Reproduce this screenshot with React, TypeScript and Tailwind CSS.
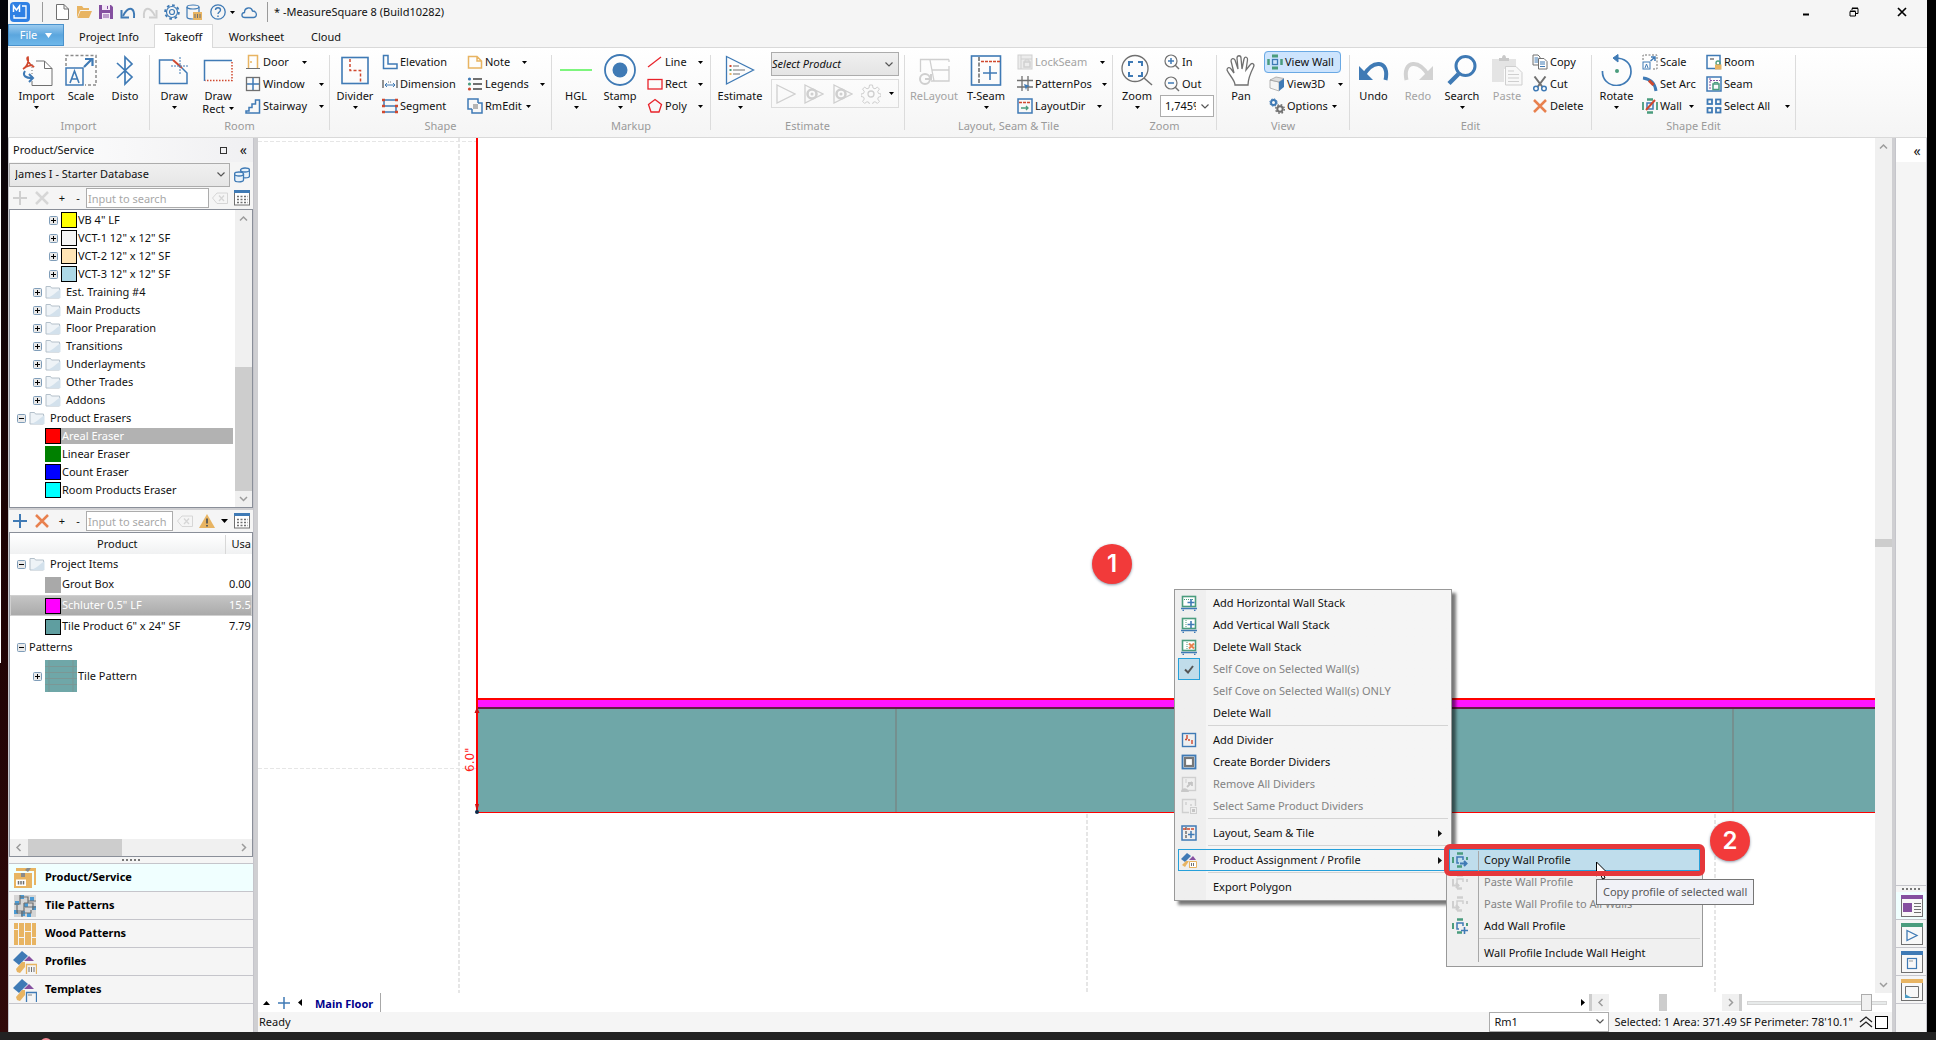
import type { ReactNode } from "react";

const BLUE = "#3f7ab5";
const GREEN = "#4a9c7d";
const RED = "#d0492f";
const ORANGE = "#e8b462";
const GRAY = "#707070";

type SvgProps = {
  size?: number;
  children: ReactNode;
};

const Svg = ({ size = 16, children }: SvgProps) => {
  return (
    <svg
      width={size}
      height={size}
      viewBox={`0 0 ${size} ${size}`}
      fill="none"
      stroke={BLUE}
      className="shrink-0"
      aria-hidden="true"
    >
      {children}
    </svg>
  );
};

const Arrow = ({ className = "" }: { className?: string }) => (
  <svg width="5" height="3" viewBox="0 0 5 3" className={`shrink-0 ${className}`} aria-hidden="true">
    <path d="M0 0h5L2.5 3z" fill="#000" />
  </svg>
);

const Chevron = ({ className = "" }: { className?: string }) => (
  <svg width="8" height="5" viewBox="0 0 8 5" className={`shrink-0 ${className}`} aria-hidden="true">
    <path d="M0.5 0.5L4 4L7.5 0.5" fill="none" stroke="#555" strokeWidth="1.2" />
  </svg>
);

/* ---------- large ribbon icons ---------- */

const ImportIcon = () => (
  <Svg size={32}>
    <path d="M15 7H23.500L31 14.500V31.500H11V27" stroke={GRAY} />
    <path d="M23.500 7V14.500H31" stroke={GRAY} />
    <path d="M11 10V24" stroke={GRAY} strokeDasharray="1 2" />
    <path d="M2 15C6 13 8 8 7 3C5 3 6 9 13 13C11 10 6 12 2 15z" stroke={RED} strokeWidth="1.700" />
    <path d="M4 17C1 22 5 24 11 24" strokeWidth="2" />
    <path d="M8 20l4 4-4 4" strokeWidth="2" />
  </Svg>
);

const ScaleIcon = () => (
  <Svg size={32}>
    <path d="M1 12V1.500H31V31H20" stroke="#8a8a8a" strokeWidth="1.500" strokeDasharray="3 2" />
    <rect x="1" y="14" width="17" height="17" strokeWidth="1.500" />
    <path d="M5 29L9.500 17L14 29M6.500 25H12.500" strokeWidth="1.600" />
    <path d="M19 13L26 6M20 5H27.500V12" strokeWidth="2.200" />
  </Svg>
);

const DistoIcon = () => (
  <Svg size={32}>
    <path d="M8 9L23 23L16 30V3L23 10L8 24" strokeWidth="1.700" />
  </Svg>
);

const DrawIcon = () => (
  <Svg size={32}>
    <path d="M15 6H1.500V29.500H29V19L24 14" strokeWidth="1.500" />
    <path d="M15 6L24 14" stroke={RED} strokeWidth="2" />
    <path d="M22 3V21M13 12H31" strokeDasharray="2 1" />
  </Svg>
);

const DrawRectIcon = () => (
  <Svg size={32}>
    <path d="M2.500 27V6.500H30" strokeWidth="1.500" />
    <path d="M30 8V26.500H3" stroke={RED} strokeWidth="1.500" strokeDasharray="1.500 1.500" />
  </Svg>
);

const DividerIcon = () => (
  <Svg size={32}>
    <rect x="3" y="3.500" width="26" height="26" strokeWidth="1.600" />
    <path d="M11 5V16.500H21.500V29" stroke={RED} strokeWidth="1.500" strokeDasharray="3 2" />
  </Svg>
);

const HglIcon = () => (
  <Svg size={32}>
    <path d="M0 16H32" stroke="#7df57d" strokeWidth="2" />
  </Svg>
);

const StampIcon = () => (
  <Svg size={32}>
    <circle cx="16" cy="16" r="15" strokeWidth="1.800" />
    <circle cx="16" cy="16" r="7.500" fill={BLUE} stroke="none" />
  </Svg>
);

const EstimateIcon = () => (
  <Svg size={32}>
    <path d="M2.500 2.500L29.500 16L2.500 30z" strokeWidth="1.300" />
    <path d="M9 12H15M9 16H21M9 20H16" stroke={GRAY} />
    <path d="M5.500 12h2" stroke={RED} strokeWidth="2" />
    <path d="M5.500 16h2" stroke={GREEN} strokeWidth="2" />
    <path d="M5.500 20h2" stroke={ORANGE} strokeWidth="2" />
  </Svg>
);

const ReLayoutIcon = () => (
  <Svg size={32}>
    <g stroke="#cfcfcf" strokeWidth="1.300">
      <path d="M2.500 18V5.500H31M12 6L16 27M14 16H31M31 5.500V8M31 12V27H13" />
      <circle cx="7" cy="25" r="5" strokeWidth="2" />
      <path d="M7 25H13V20" strokeWidth="2" />
    </g>
  </Svg>
);

const TSeamIcon = () => (
  <Svg size={32}>
    <rect x="1.500" y="2" width="29" height="29" strokeWidth="1.600" />
    <path d="M9 3V30" stroke={GRAY} strokeWidth="1.600" strokeDasharray="4 1.500" />
    <path d="M11 7.500H30" stroke={RED} strokeWidth="1.600" strokeDasharray="3 1" />
    <path d="M20 12V26M13 19H27" strokeWidth="1.600" />
  </Svg>
);

const ZoomIcon = () => (
  <Svg size={32}>
    <circle cx="14" cy="14.500" r="13" stroke={GRAY} strokeWidth="1.300" />
    <path d="M23 24L31 31" stroke={GRAY} strokeWidth="1.500" />
    <path d="M8 12V8H12M17 8H21V12M21 18V22H17M12 22H8V18" strokeWidth="2" />
  </Svg>
);

const PanIcon = () => (
  <Svg size={32}>
    <path
      d="M10 31C10 26 4 21 2 16C2 13 5 13 6 15L9 19L6 7C6 4 9 4 10 6L13 15L12 4C12 1 16 1 16 4L17 15L19 5C20 2 23 3 22.500 6L21 16L25 11C27 8 30 10 28.500 13C26 18 23 24 23 31z"
      fill="#fff"
      stroke={GRAY}
      strokeWidth="1.300"
    />
  </Svg>
);

const TurnIcon = ({ color, flip }: { color: string; flip?: boolean }) => (
  <Svg size={32}>
    <g transform={flip ? "translate(32 0) scale(-1 1)" : undefined}>
      <path d="M5 22C10 14 16 9.500 21 10C27 10.500 29.500 17 27.500 26" stroke={color} strokeWidth="4" />
      <path d="M1 12V26H15L1 12z" fill={color} stroke="none" />
    </g>
  </Svg>
);

const SearchIcon = () => (
  <Svg size={32}>
    <circle cx="19.500" cy="12" r="9.500" strokeWidth="3" />
    <path d="M12.500 20L3 29.500" strokeWidth="4.500" />
  </Svg>
);

const PasteIcon = () => (
  <Svg size={32}>
    <path d="M1 5H25V15H13V28H1z" fill="#e4e4e4" stroke="none" />
    <path d="M8 7V4H11C11 0 15 0 15 4H18V7z" fill="#c9c9c9" stroke="none" />
    <path d="M14.500 12.500H25L31 18.500V31H14.500z" stroke="#cfcfcf" fill="#f8f8f8" />
    <path d="M17 17H23M17 20.500H28M17 24H28M17 27.500H28" stroke="#cfcfcf" />
  </Svg>
);

const RotateIcon = () => (
  <Svg size={32}>
    <path d="M1.500 17C1 25 7 31.500 15.500 31.500C25 31.500 30 24 30 17.500C30 9 24 4 14 4" strokeWidth="1.700" />
    <path d="M17 0.500L12 4L17 8z" fill={BLUE} stroke={BLUE} />
    <circle cx="16" cy="17" r="2" fill={GREEN} stroke="none" />
  </Svg>
);

/* ---------- small ribbon icons ---------- */

const DoorIcon = () => (
  <Svg>
    <path d="M3.500 14V1.500H12.500V14" stroke={ORANGE} strokeWidth="1.500" />
    <path d="M1 14.500H15" stroke={GRAY} />
    <circle cx="6" cy="8" r="1" fill={ORANGE} stroke="none" />
  </Svg>
);

const WindowIcon = () => (
  <Svg>
    <path d="M8 2V14M2 8H14" strokeWidth="1.500" />
    <rect x="1.500" y="1.500" width="13" height="13" stroke={GRAY} strokeWidth="1.300" />
  </Svg>
);

const StairIcon = () => (
  <Svg>
    <path d="M1 15H14.500V2H10.500V6H7V9.500H4V13H1z" strokeWidth="1.500" />
  </Svg>
);

const ElevationIcon = () => (
  <Svg>
    <path d="M1.500 1.500H6V10H15V14.500H1.500z" strokeWidth="1.500" />
  </Svg>
);

const DimensionIcon = () => (
  <Svg>
    <path d="M1 4V12M15 4V12" stroke={GRAY} strokeWidth="1.500" />
    <path d="M3 9H13M5 7L3 9L5 11M11 7L13 9L11 11" />
    <path d="M6 6H10" stroke={GRAY} strokeDasharray="1 1" />
  </Svg>
);

const SegmentIcon = () => (
  <Svg>
    <path d="M2 2H14M2 2V8H14V14H2" strokeWidth="1.500" />
    <path d="M0 2h3M13 2h3M0 8h3M13 8h3M0 14h3M13 14h3" stroke={RED} strokeWidth="2.500" />
  </Svg>
);

const NoteIcon = () => (
  <Svg>
    <path d="M1.500 2.500H10L14.500 7V14H1.500zM10 2.500V7H14.500" stroke={ORANGE} strokeWidth="1.500" />
  </Svg>
);

const LegendsIcon = () => (
  <Svg>
    <path d="M6 3H15M6 8H15M6 13H15" stroke={GRAY} strokeWidth="2" />
    <circle cx="2.500" cy="3" r="1.600" fill={BLUE} stroke="none" />
    <circle cx="2.500" cy="8" r="1.600" fill={GREEN} stroke="none" />
    <circle cx="2.500" cy="13" r="1.600" fill={RED} stroke="none" />
  </Svg>
);

const RmEditIcon = () => (
  <Svg>
    <rect x="6" y="6" width="5" height="5" fill="#b5b5b5" stroke="none" />
    <path d="M5 11H1V1H11V5" strokeWidth="1.500" />
    <path d="M11 5H15V15H5V11" strokeWidth="1.500" />
  </Svg>
);

const LineIcon = () => (
  <Svg>
    <path d="M1 13L14 3" stroke="#e8222a" strokeWidth="1.200" />
  </Svg>
);

const RectIcon = () => (
  <Svg>
    <rect x="1" y="3.500" width="14" height="9.500" stroke="#e8222a" strokeWidth="1.300" />
  </Svg>
);

const PolyIcon = () => (
  <Svg>
    <path d="M8 1.500L14.500 6.500L12 14H4L1.500 6.500z" stroke="#e8222a" strokeWidth="1.300" />
  </Svg>
);

const LockSeamIcon = () => (
  <Svg>
    <g stroke="#d0d0d0">
      <rect x="1" y="1" width="14" height="14" fill="#ececec" />
      <path d="M4 1V15M4 5H15" />
      <rect x="7" y="8" width="6" height="5" strokeWidth="1.500" />
      <path d="M8 8V6H12V8" />
    </g>
  </Svg>
);

const PatternPosIcon = () => (
  <Svg>
    <path d="M5 0V15M11 0V15M0 4.500H16M0 11H16" stroke={GRAY} strokeWidth="1.300" />
    <path d="M7 8l6 2-3 1-1 3z" fill={BLUE} stroke="none" />
  </Svg>
);

const LayoutDirIcon = () => (
  <Svg>
    <rect x="1" y="1" width="14" height="14" strokeWidth="1.500" />
    <path d="M2 4.500H14" stroke={RED} strokeWidth="1.500" strokeDasharray="3 1" />
    <path d="M4 10H11M9 8L11 10L9 12" stroke={GREEN} strokeWidth="1.300" />
  </Svg>
);

const MagnifyIcon = ({ plus }: { plus?: boolean }) => (
  <Svg>
    <circle cx="7" cy="7" r="6" stroke={GRAY} strokeWidth="1.200" />
    <path d="M11 11L15 15" stroke={GRAY} strokeWidth="1.500" />
    <path d={plus ? "M4 7H10M7 4V10" : "M4 7H10"} strokeWidth="1.500" />
  </Svg>
);

const ViewWallIcon = () => (
  <Svg>
    <path d="M5 2H11M5 14H11" stroke={GREEN} strokeWidth="3" />
    <path d="M1.500 5V11M14.500 5V11" stroke={GREEN} strokeWidth="2.500" />
    <rect x="5.500" y="5.500" width="5" height="5" strokeWidth="1.300" />
  </Svg>
);

const CubeIcon = () => (
  <Svg>
    <path d="M1 4L10 6V15L1 12z" fill="#f4f4f4" stroke="#999" strokeWidth="0.700" />
    <path d="M1 4L7 1L15 2.500L10 6z" fill="#ddd" stroke="#999" strokeWidth="0.700" />
    <path d="M10 6L15 2.500V11L10 15z" fill={BLUE} stroke="none" />
  </Svg>
);

const OptionsIcon = () => (
  <Svg>
    <circle cx="4.500" cy="4.500" r="2.500" strokeWidth="2" />
    <circle cx="4.500" cy="4.500" r="3.700" strokeWidth="1" strokeDasharray="1.500 1.400" />
    <circle cx="11" cy="11" r="2.700" stroke={GRAY} strokeWidth="2" />
    <circle cx="11" cy="11" r="4.300" stroke={GRAY} strokeWidth="1.400" strokeDasharray="1.700 1.700" />
  </Svg>
);

const CopyIcon = () => (
  <Svg>
    <path d="M1 1H6L8 3V11H1z" stroke={GRAY} />
    <path d="M2.500 4H6M2.500 6H6M2.500 8H6" />
    <path d="M6.500 4.500H12L15 7.500V15H6.500z" fill="#fff" stroke={GRAY} />
    <path d="M8 8H13M8 10H13M8 12.500H13" />
  </Svg>
);

const CutIcon = () => (
  <Svg>
    <path d="M2.500 0.500L10.500 11M13.500 0.500L5.500 11" stroke={GRAY} strokeWidth="2" />
    <circle cx="4" cy="12.500" r="2.300" strokeWidth="1.500" />
    <circle cx="12" cy="12.500" r="2.300" strokeWidth="1.500" />
  </Svg>
);

const CrossIcon = ({ color = "#e8814f" }: { color?: string }) => (
  <Svg>
    <path d="M2 2L14 14M14 2L2 14" stroke={color} strokeWidth="2.500" />
  </Svg>
);

const PlusIcon = ({ color = BLUE }: { color?: string }) => (
  <Svg>
    <path d="M8 1V15M1 8H15" stroke={color} strokeWidth="2" />
  </Svg>
);

const SmallScaleIcon = () => (
  <Svg>
    <path d="M1 6V1H15V15H10" stroke={GRAY} strokeDasharray="2 1.500" />
    <rect x="1" y="8" width="7" height="7" />
    <path d="M3 14L4.500 10L6 14" />
    <path d="M8.500 7L12.500 3.500M9 3H13V7" strokeWidth="1.500" />
  </Svg>
);

const SetArcIcon = () => (
  <Svg>
    <path d="M1 2C9 3 13 8 14 15" strokeWidth="3" />
    <path d="M7 4.500L11.500 9" stroke={RED} strokeWidth="3" />
  </Svg>
);

const WallIcon = () => (
  <Svg>
    <path d="M5 1.500H11M5 14.500H11" stroke={GREEN} strokeWidth="2.500" />
    <path d="M1 4V12M15 4V12" stroke={GREEN} strokeWidth="1.800" />
    <rect x="5" y="5" width="6" height="6" strokeWidth="1.500" />
    <path d="M4 12L13 2" stroke={RED} strokeWidth="2" />
  </Svg>
);

const RoomIcon = () => (
  <Svg>
    <rect x="1" y="1.500" width="13" height="13" strokeWidth="1.500" />
    <path d="M4 5H8" stroke="#999" strokeWidth="2" />
    <circle cx="12" cy="9" r="2" stroke={GREEN} strokeWidth="1.300" />
    <rect x="9" y="10.500" width="6.500" height="5" fill={ORANGE} stroke="none" />
  </Svg>
);

const SeamIcon = () => (
  <Svg>
    <rect x="1" y="1" width="14" height="14" strokeWidth="1.500" />
    <path d="M4 2V14M4 4.500H14" stroke="#8550a0" strokeDasharray="2 1" />
    <rect x="7" y="8" width="6" height="5.500" stroke={GREEN} strokeWidth="1.500" />
    <path d="M8 8V6.500H12V8" stroke={GREEN} />
  </Svg>
);

const SelectAllIcon = () => (
  <Svg>
    <g strokeWidth="1.800">
      <rect x="1.500" y="1.500" width="4.500" height="4.500" />
      <rect x="10" y="1.500" width="4.500" height="4.500" />
      <rect x="1.500" y="10" width="4.500" height="4.500" />
      <rect x="10" y="10" width="4.500" height="4.500" />
    </g>
  </Svg>
);

/* ---------- ribbon ---------- */

type BigButtonProps = {
  icon: ReactNode;
  label: string;
  label2?: string;
  arrow?: boolean;
  disabled?: boolean;
  className?: string;
};

const BigButton = ({ icon, label, label2, arrow, disabled, className = "w-11" }: BigButtonProps) => {
  return (
    <button
      type="button"
      disabled={disabled}
      className={`flex flex-col items-center pt-[3px] leading-[13px] whitespace-nowrap disabled:text-[#a3a3a3] ${className}`}
    >
      {icon}
      <span className="mt-[3px]">{label}</span>
      {label2 && (
        <span className="flex items-center gap-1">
          {label2}
          <Arrow />
        </span>
      )}
      {arrow && <Arrow className="mt-1" />}
    </button>
  );
};

type SmallButtonProps = {
  icon: ReactNode;
  label: string;
  arrow?: boolean;
  disabled?: boolean;
  active?: boolean;
  className?: string;
};

const SmallButton = ({ icon, label, arrow, disabled, active, className = "" }: SmallButtonProps) => {
  return (
    <button
      type="button"
      disabled={disabled}
      className={`flex h-[22px] items-center gap-[2px] whitespace-nowrap disabled:text-[#a3a3a3] ${
        active ? "rounded-sm bg-[#cde4fd] outline -outline-offset-1 outline-[#6aa9e4]" : ""
      } ${className}`}
    >
      {icon}
      <span>{label}</span>
      {arrow && <Arrow className="ml-auto" />}
    </button>
  );
};

type GroupProps = {
  title: string;
  className: string;
  children: ReactNode;
};

const Group = ({ title, className, children }: GroupProps) => {
  return (
    <section className={`flex shrink-0 items-start ${className}`}>
      <div className="flex min-w-0 flex-1 flex-col">
        <div className="flex h-[69px] items-start pt-[3px]">{children}</div>
        <h2 className="text-center leading-[18px] text-[#9a9a9a]">{title}</h2>
      </div>
      <div className="mt-[7px] h-[75px] w-px bg-[#dcdcdc]" />
    </section>
  );
};

const Column = ({ className = "", children }: { className?: string; children: ReactNode }) => (
  <div className={`flex flex-col items-start ${className}`}>{children}</div>
);

const PlayGhost = ({ dot }: { dot?: boolean }) => (
  <Svg size={20}>
    <path d="M1 1L19 10L1 19z" stroke="#cfcfcf" strokeWidth="1.300" />
    {dot && <circle cx="8" cy="10" r="4.500" stroke="#cfcfcf" strokeWidth="2.500" />}
    {dot && <circle cx="8" cy="10" r="1.500" fill="#cfcfcf" stroke="none" />}
  </Svg>
);

const Ribbon = () => {
  return (
    <div className="flex h-[91px] overflow-hidden border-y border-[#d9d9d9] bg-linear-to-b from-white to-[#f5f5f5]">
      <Group title="Import" className="w-[142px]">
        <BigButton icon={<ImportIcon />} label="Import" arrow className="ml-[6px] w-[45px]" />
        <BigButton icon={<ScaleIcon />} label="Scale" />
        <BigButton icon={<DistoIcon />} label="Disto" />
      </Group>
      <Group title="Room" className="w-[180px]">
        <BigButton icon={<DrawIcon />} label="Draw" arrow className="w-12" />
        <BigButton icon={<DrawRectIcon />} label="Draw" label2="Rect" className="w-10" />
        <Column className="ml-[7px]">
          <SmallButton icon={<DoorIcon />} label="Door" arrow className="w-[62px]" />
          <SmallButton icon={<WindowIcon />} label="Window" arrow className="w-[79px]" />
          <SmallButton icon={<StairIcon />} label="Stairway" arrow className="w-[79px]" />
        </Column>
      </Group>
      <Group title="Shape" className="w-[222px]">
        <BigButton icon={<DividerIcon />} label="Divider" arrow className="w-[50px]" />
        <Column className="ml-[2px] w-[85px]">
          <SmallButton icon={<ElevationIcon />} label="Elevation" />
          <SmallButton icon={<DimensionIcon />} label="Dimension" />
          <SmallButton icon={<SegmentIcon />} label="Segment" />
        </Column>
        <Column>
          <SmallButton icon={<NoteIcon />} label="Note" arrow className="w-[60px]" />
          <SmallButton icon={<LegendsIcon />} label="Legends" arrow className="w-[78px]" />
          <SmallButton icon={<RmEditIcon />} label="RmEdit" arrow className="w-[64px]" />
        </Column>
      </Group>
      <Group title="Markup" className="w-[159px]">
        <BigButton icon={<HglIcon />} label="HGL" arrow className="w-12" />
        <BigButton icon={<StampIcon />} label="Stamp" arrow className="w-10" />
        <Column className="ml-[7px] w-14">
          <SmallButton icon={<LineIcon />} label="Line" arrow className="w-full" />
          <SmallButton icon={<RectIcon />} label="Rect" arrow className="w-full" />
          <SmallButton icon={<PolyIcon />} label="Poly" arrow className="w-full" />
        </Column>
      </Group>
      <Group title="Estimate" className="w-[194px]">
        <BigButton icon={<EstimateIcon />} label="Estimate" arrow className="w-[58px]" />
        <div className="ml-[2px] w-32">
          <div className="relative mt-px">
            <select
              aria-label="Select Product"
              className="h-6 w-full appearance-none border border-[#acacac] bg-linear-to-b from-[#f0f0f0] to-[#e4e4e4] italic"
            >
              <option>Select Product</option>
            </select>
            <Chevron className="pointer-events-none absolute top-[10px] right-[6px]" />
          </div>
          <div className="mt-[3px] flex h-[29px] items-center justify-between border border-[#dcdcdc] px-1">
            <PlayGhost />
            <PlayGhost dot />
            <PlayGhost dot />
            <Svg size={20}>
              <circle cx="10" cy="10" r="3" stroke="#cfcfcf" strokeWidth="1.300" />
              <path
                d="M8.500 1h3l.5 3 2 .8 2.400-1.700 2 2-1.700 2.400.8 2 2.500.5v2.500l-2.500.5-.8 2 1.700 2.400-2 2-2.400-1.700-2 .8-.5 2.500h-3l-.5-2.500-2-.8-2.400 1.700-2-2 1.700-2.400-.8-2-2.500-.5v-2.500l2.500-.5.8-2L1.600 5.100l2-2L6 4.800l2-.8z"
                stroke="#cfcfcf"
              />
            </Svg>
            <Arrow />
          </div>
        </div>
      </Group>
      <Group title="Layout, Seam & Tile" className="w-[208px]">
        <BigButton icon={<ReLayoutIcon />} label="ReLayout" disabled className="w-[58px]" />
        <BigButton icon={<TSeamIcon />} label="T-Seam" arrow className="w-[46px]" />
        <Column className="ml-2">
          <SmallButton icon={<LockSeamIcon />} label="LockSeam" arrow disabled className="w-[88px]" />
          <SmallButton icon={<PatternPosIcon />} label="PatternPos" arrow className="w-[90px]" />
          <SmallButton icon={<LayoutDirIcon />} label="LayoutDir" arrow className="w-[85px]" />
        </Column>
      </Group>
      <Group title="Zoom" className="w-[104px]">
        <BigButton icon={<ZoomIcon />} label="Zoom" arrow className="ml-px w-[46px]" />
        <Column>
          <SmallButton icon={<MagnifyIcon plus />} label="In" className="ml-1" />
          <SmallButton icon={<MagnifyIcon />} label="Out" className="ml-1" />
          <div className="relative">
            <select
              aria-label="Zoom level"
              className="h-[22px] w-[54px] appearance-none border border-[#acacac] bg-white pl-1"
            >
              <option>1,745%</option>
            </select>
            <div className="pointer-events-none absolute top-px right-px flex h-5 w-[17px] items-center justify-center bg-white">
              <Chevron />
            </div>
          </div>
        </Column>
      </Group>
      <Group title="View" className="w-[133px]">
        <BigButton icon={<PanIcon />} label="Pan" className="ml-px w-[46px]" />
        <Column>
          <SmallButton icon={<ViewWallIcon />} label="View Wall" active className="w-[77px] px-[3px]" />
          <SmallButton icon={<CubeIcon />} label="View3D" arrow className="ml-[5px] w-[74px]" />
          <SmallButton icon={<OptionsIcon />} label="Options" arrow className="ml-[5px] w-[68px]" />
        </Column>
      </Group>
      <Group title="Edit" className="w-[242px]">
        <BigButton icon={<TurnIcon color={BLUE} />} label="Undo" className="ml-px w-[45px]" />
        <BigButton icon={<TurnIcon color="#d2d2d2" flip />} label="Redo" disabled />
        <BigButton icon={<SearchIcon />} label="Search" arrow />
        <BigButton icon={<PasteIcon />} label="Paste" disabled className="w-[46px]" />
        <Column className="ml-[2px]">
          <SmallButton icon={<CopyIcon />} label="Copy" />
          <SmallButton icon={<CutIcon />} label="Cut" />
          <SmallButton icon={<CrossIcon />} label="Delete" />
        </Column>
      </Group>
      <Group title="Shape Edit" className="w-[204px]">
        <BigButton icon={<RotateIcon />} label="Rotate" arrow className="w-[49px]" />
        <Column className="ml-px w-16">
          <SmallButton icon={<SmallScaleIcon />} label="Scale" />
          <SmallButton icon={<SetArcIcon />} label="Set Arc" />
          <SmallButton icon={<WallIcon />} label="Wall" arrow className="w-[52px]" />
        </Column>
        <Column>
          <SmallButton icon={<RoomIcon />} label="Room" />
          <SmallButton icon={<SeamIcon />} label="Seam" />
          <SmallButton icon={<SelectAllIcon />} label="Select All" arrow className="w-[84px]" />
        </Column>
      </Group>
    </div>
  );
};

/* ---------- title bar and tabs ---------- */

const QuickAccess = () => (
  <div className="flex items-center gap-[6px]">
    <button type="button" aria-label="New">
      <Svg>
        <path d="M2.500 0.500H10L14.500 5V15.500H2.500zM10 0.500V5H14.500" fill="#fff" stroke={GRAY} />
      </Svg>
    </button>
    <button type="button" aria-label="Open">
      <Svg>
        <path d="M1 14V2H6L7.500 4H13V6H4L1 14z" fill={ORANGE} stroke="none" />
        <path d="M4.500 7H16L13 14H1.500z" fill={ORANGE} stroke="none" />
      </Svg>
    </button>
    <button type="button" aria-label="Save">
      <Svg>
        <path d="M1 1H13L15 3V15H1z" fill="#8550a0" stroke="none" />
        <path d="M4 1H12V6H4zM4 9H12V15H4z" fill="#f3e8f7" stroke="none" />
        <path d="M9.500 2V5M5 11H11M5 13H11" stroke="#8550a0" />
      </Svg>
    </button>
    <button type="button" aria-label="Undo">
      <Svg>
        <path d="M3 12C6 6 9 4 11.500 5C14 6 14.500 9 14 14" strokeWidth="2" />
        <path d="M1.500 6V13.500H9" strokeWidth="2" />
      </Svg>
    </button>
    <button type="button" aria-label="Redo" disabled>
      <Svg>
        <path d="M13 12C10 6 7 4 4.500 5C2 6 1.500 9 2 14" stroke="#cfcfcf" strokeWidth="2" />
        <path d="M14.500 6V13.500H7" stroke="#cfcfcf" strokeWidth="2" />
      </Svg>
    </button>
    <button type="button" aria-label="Settings">
      <Svg>
        <circle cx="8" cy="8" r="2.500" strokeWidth="1.200" />
        <circle cx="8" cy="8" r="5.500" strokeWidth="1.200" />
        <circle cx="8" cy="8" r="6.900" strokeWidth="1.800" strokeDasharray="2.700 2.700" />
      </Svg>
    </button>
    <button type="button" aria-label="Database">
      <Svg>
        <ellipse cx="7" cy="3" rx="6" ry="2" strokeWidth="1.200" />
        <path d="M1 3V13C1 14.500 4 15 7 15M13 3V8" strokeWidth="1.200" />
        <rect x="7" y="8" width="9" height="8" fill={ORANGE} stroke="none" />
        <path d="M9 10V14M11.500 10V14M14 10V14" stroke={GRAY} />
      </Svg>
    </button>
    <button type="button" aria-label="Help" className="ml-[2px] flex items-center gap-1">
      <Svg>
        <circle cx="8" cy="8" r="7.200" strokeWidth="1.300" />
        <path d="M5.500 6C5.500 3 10.500 3 10.500 6C10.500 8 8 8 8 10" strokeWidth="1.400" />
        <path d="M8 11.500V13" strokeWidth="1.400" />
      </Svg>
      <Arrow />
    </button>
    <button type="button" aria-label="Cloud sync">
      <Svg>
        <path
          d="M4 13.500C0 13.500 0 9 3.500 8.500C3.500 3 10.500 2.500 11.500 7C16.500 7 16.500 13.500 12.500 13.500z"
          strokeWidth="1.300"
        />
      </Svg>
    </button>
  </div>
);

const TitleBar = () => (
  <header className="flex h-6 items-center bg-[#f5f5f5]">
    <svg width="22" height="22" viewBox="0 0 22 22" className="ml-px" aria-hidden="true">
      <rect x="1" y="1" width="20" height="20" rx="4" fill="#2f80e4" />
      <path d="M4.500 11V5L7.500 9L10.500 5V11" fill="none" stroke="#fff" strokeWidth="1.500" />
      <path d="M13 5H17V17H5V14" fill="none" stroke="#fff" strokeWidth="1.300" />
    </svg>
    <div className="mx-[11px] h-5 w-px bg-[#9a9a9a]" />
    <QuickAccess />
    <div className="mr-[6px] ml-[10px] h-5 w-px bg-[#9a9a9a]" />
    <h1>* -MeasureSquare 8 (Build10282)</h1>
    <div className="mr-5 ml-auto flex items-center gap-[38px]">
      <button type="button" aria-label="Minimize">
        <svg width="10" height="10" viewBox="0 0 10 10">
          <path d="M2 7.500H8" stroke="#000" strokeWidth="2" />
        </svg>
      </button>
      <button type="button" aria-label="Restore">
        <svg width="10" height="10" viewBox="0 0 10 10" fill="none" stroke="#000">
          <path d="M3 3V1.500H9V6.500H7M3 1H9" />
          <path d="M1 4.500H6.500V9H1zM1 4H6.500" />
        </svg>
      </button>
      <button type="button" aria-label="Close">
        <svg width="10" height="10" viewBox="0 0 10 10" fill="none" stroke="#000" strokeWidth="1.700">
          <path d="M1 1L9 9M9 1L1 9" />
        </svg>
      </button>
    </div>
  </header>
);

const Tabs = () => (
  <nav className="flex h-[23px] items-end bg-[#f5f5f5]">
    <button
      type="button"
      className="flex h-[22px] w-14 items-center justify-center gap-2 self-start border border-[#4a92cc] bg-linear-to-b from-[#9bcbef] via-[#5ba6de] to-[#6fb8ea] text-white"
    >
      File
      <svg width="7" height="5" viewBox="0 0 7 5" aria-hidden="true">
        <path d="M0 0h7L3.500 5z" fill="#fff" />
      </svg>
    </button>
    <a href="#project" className="w-[90px] pb-[2px] text-center">
      Project Info
    </a>
    <a
      href="#takeoff"
      className="z-10 -mb-px h-6 w-[59px] border border-b-0 border-[#d9d9d9] bg-white pt-1 text-center"
    >
      Takeoff
    </a>
    <a href="#worksheet" className="w-[87px] pb-[2px] text-center">
      Worksheet
    </a>
    <a href="#cloud" className="w-[52px] pb-[2px] text-center">
      Cloud
    </a>
  </nav>
);

/* ---------- left panel ---------- */

const Expander = ({ open }: { open?: boolean }) => (
  <svg width="9" height="9" viewBox="0 0 9 9" className="shrink-0" aria-hidden="true">
    <rect x="0.500" y="0.500" width="8" height="8" rx="1" fill="#e9e9e9" stroke="#7f9db9" />
    <path d={open ? "M2 4.500H7" : "M2 4.500H7M4.500 2V7"} stroke="#000" />
  </svg>
);

const FolderIcon = () => (
  <svg width="16" height="14" viewBox="0 0 16 14" className="shrink-0" aria-hidden="true">
    <path d="M1 13V1.500H5.500L6.500 3H14.500V13z" fill="#eef3f7" stroke="#b4c0ca" />
    <path d="M2 13C8 11 10 8 15.500 4V13z" fill="#d3e1ec" />
  </svg>
);

const Swatch = ({ className }: { className: string }) => (
  <span className={`size-4 shrink-0 border ${className}`} />
);

type TreeRow = {
  label: string;
  indent: string;
  open?: boolean;
  leaf?: boolean;
  swatch?: string;
  selected?: boolean;
};

const treeRows: TreeRow[] = [
  { label: 'VB 4" LF', indent: "pl-[39px]", swatch: "border-black bg-[#ffff00]" },
  { label: 'VCT-1 12" x 12" SF', indent: "pl-[39px]", swatch: "border-black bg-[#f5f5f5]" },
  { label: 'VCT-2 12" x 12" SF', indent: "pl-[39px]", swatch: "border-black bg-[#ffe4b5]" },
  { label: 'VCT-3 12" x 12" SF', indent: "pl-[39px]", swatch: "border-black bg-[#add8e6]" },
  { label: "Est. Training #4", indent: "pl-[23px]" },
  { label: "Main Products", indent: "pl-[23px]" },
  { label: "Floor Preparation", indent: "pl-[23px]" },
  { label: "Transitions", indent: "pl-[23px]" },
  { label: "Underlayments", indent: "pl-[23px]" },
  { label: "Other Trades", indent: "pl-[23px]" },
  { label: "Addons", indent: "pl-[23px]" },
  { label: "Product Erasers", indent: "pl-[7px]", open: true },
  { label: "Areal Eraser", indent: "pl-[35px]", leaf: true, swatch: "border-black bg-[#ff0000]", selected: true },
  { label: "Linear Eraser", indent: "pl-[35px]", leaf: true, swatch: "border-[#008000] bg-[#008000]" },
  { label: "Count Eraser", indent: "pl-[35px]", leaf: true, swatch: "border-black bg-[#0000ff]" },
  { label: "Room Products Eraser", indent: "pl-[35px]", leaf: true, swatch: "border-black bg-[#00ffff]" },
];

const Tree = () => (
  <ul className="min-w-0 flex-1 pt-px pr-[2px]">
    {treeRows.map(({ label, indent, open, leaf, swatch, selected }) => (
      <li key={label} className={`flex h-[18px] items-center ${indent}`}>
        {!leaf && (
          <span className="mr-[3px]">
            <Expander open={open} />
          </span>
        )}
        {swatch ? <Swatch className={swatch} /> : <FolderIcon />}
        <span
          className={`leading-4 whitespace-nowrap ${swatch ? "pl-px" : "pl-[5px]"} ${
            selected ? "flex-1 bg-[#b2b2b2] text-white" : ""
          }`}
        >
          {label}
        </span>
      </li>
    ))}
  </ul>
);

const ScrollArrow = ({ d }: { d: string }) => (
  <svg width="9" height="9" viewBox="0 0 9 9" className="shrink-0" aria-hidden="true">
    <path d={d} fill="none" stroke="#9c9c9c" strokeWidth="1.500" />
  </svg>
);

const UP = "M1 6.500L4.500 3L8 6.500";
const DOWN = "M1 3L4.500 6.500L8 3";
const LEFT = "M6.500 1L3 4.500L6.500 8";
const RIGHT = "M3 1L6.500 4.500L3 8";

const GridIcon = () => (
  <Svg>
    <rect x="0.500" y="1.500" width="15" height="13.500" fill="#fff" stroke={GRAY} />
    <path d="M0 1.500H16" strokeWidth="3" />
    <path d="M3 6.500H14M3 9.500H14M3 12.500H14" stroke={GRAY} strokeWidth="1.500" strokeDasharray="2 1.500" />
  </Svg>
);

const ClearIcon = () => (
  <Svg>
    <path d="M5 3H15.500V13.500H5L0.500 8z" stroke="#d6d6d6" />
    <path d="M7 5.500L12 11M12 5.500L7 11" stroke="#d6d6d6" strokeWidth="1.300" />
  </Svg>
);

type PanelToolbarProps = {
  muted?: boolean;
  inputClass: string;
  children?: ReactNode;
};

const PanelToolbar = ({ muted, inputClass, children }: PanelToolbarProps) => (
  <div className="flex h-[22px] shrink-0 items-center px-[3px]">
    <button type="button" aria-label="Add">
      <PlusIcon color={muted ? "#cfcfcf" : BLUE} />
    </button>
    <button type="button" aria-label="Remove" className="ml-[6px]">
      <CrossIcon color={muted ? "#d6d6d6" : undefined} />
    </button>
    <button type="button" className="ml-1 w-4 text-center">
      +
    </button>
    <button type="button" className="w-4 text-center">
      -
    </button>
    <input
      type="text"
      aria-label="Search products"
      placeholder="Input to search"
      className={`h-5 min-w-0 border border-[#acacac] bg-white pl-px placeholder:text-[#a8a8a8] ${inputClass}`}
    />
    <div className="ml-auto flex items-center gap-[6px]">
      <ClearIcon />
      {children}
      <button type="button" aria-label="Columns">
        <GridIcon />
      </button>
    </div>
  </div>
);

const ProductTable = () => (
  <table className="w-full table-fixed border-collapse">
    <thead>
      <tr className="h-[19px] bg-linear-to-b from-white to-[#f0f1f2]">
        <th className="border-r border-[#d8d8d8] font-normal">Product</th>
        <th className="w-[27px] pl-[6px] text-left font-normal">Usa</th>
      </tr>
    </thead>
    <tbody>
      <tr className="h-5">
        <td colSpan={2}>
          <div className="flex items-center pl-[7px]">
            <Expander open />
            <span className="ml-[3px]">
              <FolderIcon />
            </span>
            <span className="pl-[5px]">Project Items</span>
          </div>
        </td>
      </tr>
      {[
        { label: "Grout Box", qty: "0.00", swatch: "border-[#a9a9a9] bg-[#a9a9a9]" },
        { label: 'Schluter 0.5" LF', qty: "15.5", swatch: "border-black bg-[#ff00ff]", selected: true },
        { label: 'Tile Product 6" x 24" SF', qty: "7.79", swatch: "border-black bg-[#5f9ea0]" },
      ].map(({ label, qty, swatch, selected }) => (
        <tr
          key={label}
          className={`h-[21px] ${
            selected
              ? "bg-linear-to-b from-[#c6c6c6] to-[#a9a9a9] text-white outline -outline-offset-1 outline-[#d0d0d0]"
              : ""
          }`}
        >
          <td>
            <div className="flex items-center pl-[35px] whitespace-nowrap">
              <Swatch className={swatch} />
              <span className="pl-px">{label}</span>
            </div>
          </td>
          <td className="pl-[4px]">{qty}</td>
        </tr>
      ))}
      <tr className="h-[21px]">
        <td colSpan={2}>
          <div className="flex items-center gap-[3px] pl-[7px]">
            <Expander open />
            Patterns
          </div>
        </td>
      </tr>
      <tr className="h-9">
        <td colSpan={2}>
          <div className="flex items-center pl-[23px]">
            <Expander />
            <svg width="32" height="32" viewBox="0 0 32 32" className="ml-[3px]" aria-hidden="true">
              <path d="M0 0H32V32H0z" fill="#6fa7a8" />
              <path d="M0 6.500H32M0 12.500H32M0 18.500H32M0 24.500H32M4 0V32M28 0V32" stroke="#7b9795" />
            </svg>
            <span className="pl-px">Tile Pattern</span>
          </div>
        </td>
      </tr>
    </tbody>
  </table>
);

const BoxIcon = () => (
  <Svg size={24}>
    <path d="M1 7H19V22H1z" fill={ORANGE} stroke="none" />
    <path d="M3 2H23V19H21V5H3z" fill={ORANGE} stroke="none" />
    <path d="M8 7H12V11H8zM12 4L14 2H18L15 6z" fill="#8a8a8a" stroke="none" />
    <path d="M3 13.500H13V20H3z" fill="#fff" stroke="none" />
    <path d="M5.500 15V18.500M8 15V18.500M10.500 15V18.500" stroke={GRAY} strokeWidth="1.500" />
  </Svg>
);

const TileIcon = () => (
  <Svg size={24}>
    <path d="M1 1H23V23H1z" fill="#d5d5d5" stroke="none" />
    <path
      d="M7 1h4v4H7zM17 3h4v4h-4zM2 7h4v4H2zM11 9h4v4h-4zM19 12h4v4h-4zM1 16h4v4H1zM8 17h4v5H8zM14 19h4v4h-4z"
      fill="#4a9bd4"
      stroke="none"
    />
    <path
      d="M7 1V10H1M7 3H15V9M15 7H23M11 9H20V16M11 9V17H4M4 11V19M12 13H23M9 17V23M9 19H18V16M4 19H9"
      stroke={GRAY}
      strokeWidth="1.200"
    />
  </Svg>
);

const WoodIcon = () => (
  <Svg size={24}>
    <path
      d="M1 1H5V7H1zM1 8H5V23H1zM6 1H11V15H6zM6 16H11V23H6zM12 1H18V9H12zM12 10H18V23H12zM19 1H23V15H19zM19 16H23V23H19z"
      fill={ORANGE}
      stroke="none"
    />
  </Svg>
);

const ProfileIcon = ({ color, marks }: { color: string; marks?: boolean }) => (
  <Svg size={24}>
    <path d="M0 10L9 1L15 6L6 15z" fill={BLUE} stroke="none" />
    <path d="M11 11L16 6L21 11z" fill="#8550a0" stroke="none" />
    <path d="M3 19L9 12L12 12V17L7 23L4 22z" fill={ORANGE} stroke="none" />
    <path d="M13.500 24V14.500H23.500V24" fill="#f5f5f5" stroke={color} strokeWidth="1.300" />
    {marks ? (
      <path d="M16 17V22M18.500 17V22M21 17V22" stroke={GRAY} />
    ) : (
      <path d="M15 17H19" stroke="#aaa" strokeWidth="1.500" />
    )}
  </Svg>
);

const navItems = [
  { label: "Product/Service", icon: <BoxIcon />, active: true },
  { label: "Tile Patterns", icon: <TileIcon /> },
  { label: "Wood Patterns", icon: <WoodIcon /> },
  { label: "Profiles", icon: <ProfileIcon color={ORANGE} marks /> },
  { label: "Templates", icon: <ProfileIcon color={BLUE} /> },
];

const Grip = () => (
  <div className="flex h-[6px] shrink-0 items-center justify-center gap-[2px]">
    {[0, 1, 2, 3, 4].map((i) => (
      <span key={i} className="size-[2px] bg-[#777]" />
    ))}
  </div>
);

const Sidebar = () => {
  return (
    <aside className="flex w-[246px] shrink-0 flex-col border-r border-l border-[#c5c5cb] bg-[#f5f5f5]">
      <div className="flex h-6 shrink-0 items-center bg-linear-to-r from-white to-[#f0f0f2] pl-1">
        <h2>Product/Service</h2>
        <button type="button" aria-label="Dock" className="ml-auto size-[7px] border border-[#333]" />
        <button type="button" aria-label="Collapse" className="mr-[6px] ml-[13px] text-[14px] leading-5">
          «
        </button>
      </div>
      <div className="flex h-[25px] shrink-0 items-center">
        <div className="relative flex-1">
          <select
            aria-label="Database"
            className="h-6 w-full appearance-none border border-[#acacac] bg-linear-to-b from-[#f0f0f0] to-[#e6e6e6] pl-[5px]"
          >
            <option>James I - Starter Database</option>
          </select>
          <Chevron className="pointer-events-none absolute top-[9px] right-[5px]" />
        </div>
        <button type="button" aria-label="Manage databases" className="mr-[3px] ml-1">
          <Svg>
            <g strokeWidth="1.300" fill="#e8f2fa">
              <path d="M7 3V9C7 11.500 15.500 11.500 15.500 9V3" />
              <ellipse cx="11" cy="3" rx="4.500" ry="2" />
              <path d="M0.700 7V13C0.700 15.500 9.500 15.500 9.500 13V7" />
              <ellipse cx="5" cy="7" rx="4.500" ry="2" />
            </g>
          </Svg>
        </button>
      </div>
      <PanelToolbar muted inputClass="w-[123px]" />
      <div className="flex h-[299px] shrink-0 border border-[#8a8f99] bg-white">
        <Tree />
        <div className="flex w-[17px] flex-col items-center bg-[#f0f0f0] py-1">
          <ScrollArrow d={UP} />
          <div className="mt-36 h-[124px] w-full bg-[#cdcdcd]" />
          <div className="mt-auto">
            <ScrollArrow d={DOWN} />
          </div>
        </div>
      </div>
      <div className="h-[2px] shrink-0 bg-[#cfcfd2]" />
      <PanelToolbar inputClass="w-[87px]">
        <svg width="16" height="14" viewBox="0 0 16 14" aria-hidden="true">
          <path d="M8 0L16 14H0z" fill={ORANGE} />
          <path d="M8 4.500V9.500M8 11V12.500" stroke="#555" strokeWidth="1.800" />
        </svg>
        <svg width="7" height="4" viewBox="0 0 7 4" aria-hidden="true">
          <path d="M0 0h7L3.500 4z" fill="#000" />
        </svg>
      </PanelToolbar>
      <div className="flex min-h-0 flex-1 flex-col border border-[#8a8f99] bg-white pt-[2px]">
        <ProductTable />
        <div className="mt-auto flex h-[17px] items-center bg-[#f0f0f0] px-1">
          <ScrollArrow d={LEFT} />
          <div className="ml-[5px] h-full w-[94px] bg-[#cdcdcd]" />
          <div className="ml-auto">
            <ScrollArrow d={RIGHT} />
          </div>
        </div>
      </div>
      <Grip />
      <nav className="shrink-0 border-t border-[#c5c5cb] pb-7">
        {navItems.map(({ label, icon, active }) => (
          <a
            key={label}
            href="#panel"
            className={`flex h-7 items-center gap-2 border-b border-[#c5c5cb] pl-1 font-bold text-black ${
              active ? "bg-[#f0ffff]" : ""
            }`}
          >
            {icon}
            {label}
          </a>
        ))}
      </nav>
    </aside>
  );
};

/* ---------- drawing canvas ---------- */

const Drawing = () => (
  <svg className="absolute inset-0 h-full w-full" aria-hidden="true">
    <g stroke="#e6e6e6" strokeDasharray="4 2">
      <path d="M0 3.500H219M0 630.500H219" />
      <path d="M201 0V855" strokeWidth="2" />
      <path d="M829 676V855M1457 676V855" strokeWidth="2" />
    </g>
    <rect x="219" y="570" width="100%" height="104" fill="#6fa7a8" />
    <path d="M638 570V674M1475 570V674" stroke="#74908f" strokeWidth="2" />
    <rect x="219" y="561" width="100%" height="8" fill="#ff14ff" />
    <rect x="219" y="569" width="100%" height="2" fill="#641c46" />
    <rect x="219" y="560" width="100%" height="2" fill="#ff0000" />
    <rect x="219" y="674" width="100%" height="1" fill="#ff0000" />
    <path d="M219 0V675" stroke="#ff0000" strokeWidth="2" />
    <path d="M219 569l2.500 6h-5zM219 674l2-8h-4z" fill="#d01010" />
    <circle cx="219" cy="674" r="2" fill="#0b2a4a" />
    <text
      transform="translate(216 634) rotate(-90)"
      fontFamily="DejaVu Sans, sans-serif"
      fontSize="12"
      fill="#ff2020"
    >
      6.0"
    </text>
  </svg>
);

const Badge = ({ className, children }: { className: string; children: ReactNode }) => (
  <span
    className={`absolute flex size-10 items-center justify-center rounded-full bg-[#f23a3a] font-['Inter',sans-serif] text-[24px] font-semibold text-white shadow-sm shadow-gray-400 ${className}`}
  >
    {children}
  </span>
);

/* ---------- context menus ---------- */

const StackIcon = ({ d, cross }: { d: string; cross?: boolean }) => (
  <Svg>
    <rect x="1.500" y="1.500" width="13" height="10" fill="#fff" stroke={GREEN} strokeWidth="1.600" />
    <path d="M0 13.500H16M1.500 15.500H3M13 15.500H14.500" strokeWidth="1.600" />
    <path d={d} stroke={GREEN} strokeDasharray="1 1" />
    {cross ? (
      <path d="M8 4.500L13 9.500M13 4.500L8 9.500" stroke="#e8814f" strokeWidth="2" />
    ) : (
      <path d="M10 4V11M6.500 7.500H13.500" strokeWidth="1.600" />
    )}
  </Svg>
);

const AddDividerIcon = () => (
  <Svg>
    <rect x="1.500" y="1.500" width="13" height="13" strokeWidth="1.400" />
    <path d="M6 3V7M11 8V12M4 7.500H6M7 8H9" stroke={RED} strokeWidth="1.400" />
  </Svg>
);

const RemoveDividersIcon = () => (
  <Svg>
    <rect x="1.500" y="1.500" width="13" height="13" stroke="#cfcfcf" strokeWidth="1.400" />
    <path d="M5 3V7" stroke="#cfcfcf" />
    <path d="M6 11L11 6M7 7H11V10" stroke="#c4c4c4" strokeWidth="1.800" />
    <path d="M0 16C0 11 7 11 8 16z" fill="#c8c8c8" stroke="none" />
  </Svg>
);

const SelectDividersIcon = () => (
  <Svg>
    <path d="M8 14.500H1.500V1.500H14.500V8M5 4V7M9 7H11" stroke="#cfcfcf" strokeWidth="1.400" />
    <rect x="9.500" y="9.500" width="6" height="6" stroke="#cfcfcf" />
    <rect x="11" y="11" width="3" height="3" fill="#c4c4c4" stroke="none" />
  </Svg>
);

const BorderIcon = () => (
  <Svg>
    <rect x="1.500" y="1.500" width="13" height="13" strokeWidth="1.800" />
    <rect x="4" y="4" width="8" height="8" stroke="#777" strokeWidth="2.200" fill="#fff" />
  </Svg>
);

const MenuTSeamIcon = () => (
  <Svg>
    <rect x="1" y="1" width="14" height="14" strokeWidth="1.500" />
    <path d="M5 2V14" stroke={GRAY} strokeWidth="1.500" strokeDasharray="3 1" />
    <path d="M2 4H14" stroke={RED} strokeDasharray="3 1" strokeWidth="1.500" />
    <path d="M10 6V13M7 9.500H13.500" strokeWidth="1.500" />
  </Svg>
);

const AssignIcon = () => (
  <Svg>
    <path d="M0 7L6 1L10 4L4 10z" fill={BLUE} stroke="none" />
    <path d="M8 8L12 4L15 8z" fill="#8550a0" stroke="none" />
    <path d="M1 13L5 9L8 9L4 15z" fill={ORANGE} stroke="none" />
    <path d="M8.500 16V9.500H15.500V15.500H8.500" fill="#fff" stroke={ORANGE} />
    <path d="M10.500 11V14M12.500 11V14" stroke={GRAY} />
  </Svg>
);

const WallProfileIcon = ({ kind }: { kind: "copy" | "paste" | "add" }) => {
  const muted = kind === "paste";
  return (
    <Svg>
      <g stroke={muted ? "#cfcfcf" : GREEN}>
        <path d="M5 1.500H11M5 14.500H10" strokeWidth="2.500" />
        <path d="M1 5V11M15 5V8" strokeWidth="2" />
      </g>
      <g stroke={muted ? "#cfcfcf" : BLUE}>
        <path d="M7 11H5V5H11V8" strokeWidth="1.500" />
        {kind === "copy" && <path d="M8 11.500H14M12 9L14.500 11.500L12 14" strokeWidth="2" />}
        {kind === "paste" && <path d="M0 11.500H6M4 9L6.500 11.500L4 14" strokeWidth="2" />}
        {kind === "add" && <path d="M12.500 9V16M9 12.500H16" strokeWidth="1.600" />}
      </g>
    </Svg>
  );
};

type MenuItemProps = {
  label: string;
  icon?: ReactNode;
  disabled?: boolean;
  submenu?: boolean;
  className?: string;
};

const MenuItem = ({ label, icon, disabled, submenu, className = "border-transparent" }: MenuItemProps) => (
  <li>
    <button
      type="button"
      role="menuitem"
      disabled={disabled}
      className={`flex h-[22px] w-full items-center border text-left whitespace-nowrap disabled:text-[#838383] ${className}`}
    >
      <span className="flex w-[34px] justify-start pl-[2px]">{icon}</span>
      <span>{label}</span>
      {submenu && (
        <svg width="4" height="7" viewBox="0 0 4 7" className="mr-[5px] ml-auto" aria-hidden="true">
          <path d="M0 0V7L4 3.500z" fill="#111" />
        </svg>
      )}
    </button>
  </li>
);

const MenuRule = () => (
  <li role="separator" className="ml-[30px] h-[5px] pt-px">
    <div className="h-px bg-[#d4d4d4]" />
  </li>
);

const ContextMenu = () => (
  <ul
    role="menu"
    className="absolute top-[451px] left-[916px] w-[278px] border border-[#999] bg-linear-to-r from-[#efefef] from-[31px] to-[#f5f5f5] to-[31px] px-[3px] pt-[2px] pb-[2px] shadow-[4px_4px_3px_#0008]"
  >
    <MenuItem label="Add Horizontal Wall Stack" icon={<StackIcon d="M3 4.500H13" />} />
    <MenuItem label="Add Vertical Wall Stack" icon={<StackIcon d="M5 3V11" />} />
    <MenuItem label="Delete Wall Stack" icon={<StackIcon d="M6 3V11" cross />} />
    <MenuItem
      label="Self Cove on Selected Wall(s)"
      disabled
      icon={
        <span className="-ml-[3px] flex size-[22px] items-center justify-center border border-[#26a0da] bg-[#c0dcea]">
          <svg width="10" height="9" viewBox="0 0 10 9" aria-hidden="true">
            <path d="M1 4.500L4 7.500L9 1" fill="none" stroke="#555" strokeWidth="2" />
          </svg>
        </span>
      }
    />
    <MenuItem label="Self Cove on Selected Wall(s) ONLY" disabled />
    <MenuItem label="Delete Wall" />
    <MenuRule />
    <MenuItem label="Add Divider" icon={<AddDividerIcon />} />
    <MenuItem label="Create Border Dividers" icon={<BorderIcon />} />
    <MenuItem label="Remove All Dividers" disabled icon={<RemoveDividersIcon />} />
    <MenuItem label="Select Same Product Dividers" disabled icon={<SelectDividersIcon />} />
    <MenuRule />
    <MenuItem label="Layout, Seam & Tile" submenu icon={<MenuTSeamIcon />} />
    <MenuRule />
    <MenuItem
      label="Product Assignment / Profile"
      submenu
      icon={<AssignIcon />}
      className="border-[#26a0da]"
    />
    <MenuRule />
    <MenuItem label="Export Polygon" />
  </ul>
);

const SubMenu = () => (
  <ul
    role="menu"
    className="absolute top-[708px] left-[1188px] w-[257px] border border-[#999] bg-[#f0f0f0] px-[2px] pt-[2px] pb-[2px]"
  >
    <MenuItem
      label="Copy Wall Profile"
      icon={<WallProfileIcon kind="copy" />}
      className="border-[#26a0da] bg-[#bfddec]"
    />
    <MenuItem label="Paste Wall Profile" disabled icon={<WallProfileIcon kind="paste" />} />
    <MenuItem label="Paste Wall Profile to All Walls" disabled icon={<WallProfileIcon kind="paste" />} />
    <MenuItem label="Add Wall Profile" icon={<WallProfileIcon kind="add" />} />
    <MenuRule />
    <MenuItem label="Wall Profile Include Wall Height" />
    <div className="absolute top-1 bottom-1 left-[31px] w-px bg-[#a8a8a8]" />
  </ul>
);

const Canvas = () => (
  <div className="relative min-w-0 flex-1 bg-white">
    <Drawing />
    <Badge className="top-[406px] left-[834px]">1</Badge>
    <Badge className="top-[683px] left-[1452px]">2</Badge>
    <ContextMenu />
    <SubMenu />
    <div
      role="tooltip"
      className="absolute top-[741px] left-[1338px] border border-[#767676] bg-[#f1f2f7] px-[6px] leading-6 whitespace-nowrap text-[#575757]"
    >
      Copy profile of selected wall
    </div>
    <svg width="12" height="19" viewBox="0 0 12 19" className="absolute top-[723px] left-[1338px]" aria-hidden="true">
      <path d="M0.500 1V15L4 12L6.500 18L9 17L6.500 11H10.500z" fill="#fff" stroke="#000" />
    </svg>
    <div className="absolute top-[706px] left-[1186px] h-8 w-[261px] rounded-md border-[5px] border-[#e5383b]" />
  </div>
);

const WorkArea = () => (
  <main className="flex min-w-0 flex-1 flex-col">
    <div className="flex min-h-0 flex-1">
      <Canvas />
      <div className="flex w-[17px] flex-col items-center justify-between bg-[#f0f0f0] py-1">
        <ScrollArrow d={UP} />
        <div className="-mt-[46px] h-2 w-full bg-[#cdcdcd]" />
        <ScrollArrow d={DOWN} />
      </div>
    </div>
    <div className="flex h-[19px] shrink-0 items-center bg-white pl-[5px]">
      <svg width="7" height="4" viewBox="0 0 7 4" aria-hidden="true">
        <path d="M0 4h7L3.500 0z" fill="#000" />
      </svg>
      <button type="button" aria-label="Add floor" className="ml-2">
        <svg width="12" height="12" viewBox="0 0 12 12" aria-hidden="true">
          <path d="M6 0V12M0 6H12" stroke={BLUE} strokeWidth="1.500" />
        </svg>
      </button>
      <svg width="4" height="7" viewBox="0 0 4 7" className="ml-2" aria-hidden="true">
        <path d="M4 0V7L0 3.500z" fill="#000" />
      </svg>
      <a
        href="#main-floor"
        className="ml-[13px] h-full border-r border-[#a8a8a8] pt-[3px] pr-[7px] leading-4 font-bold text-[#00008b]"
      >
        Main Floor
      </a>
      <svg width="4" height="7" viewBox="0 0 4 7" className="ml-auto" aria-hidden="true">
        <path d="M0 0V7L4 3.500z" fill="#000" />
      </svg>
      <div className="ml-1 flex h-[17px] w-[153px] items-center border-x-[3px] border-[#cdcdcd] bg-[#f0f0f0]">
        <span className="w-[17px] pl-1">
          <ScrollArrow d={LEFT} />
        </span>
        <div className="flex h-full flex-1 bg-white pl-[50px]">
          <span className="w-2 bg-[#cdcdcd]" />
        </div>
        <span className="w-[17px] pl-1">
          <ScrollArrow d={RIGHT} />
        </span>
      </div>
      <input
        type="range"
        aria-label="Zoom"
        defaultValue={89}
        className="mx-[5px] h-[17px] w-[140px] appearance-none bg-transparent [&::-webkit-slider-runnable-track]:h-1 [&::-webkit-slider-runnable-track]:border [&::-webkit-slider-runnable-track]:border-[#d6d6d6] [&::-webkit-slider-runnable-track]:bg-[#e7eaea] [&::-webkit-slider-thumb]:-mt-2 [&::-webkit-slider-thumb]:h-[17px] [&::-webkit-slider-thumb]:w-[11px] [&::-webkit-slider-thumb]:appearance-none [&::-webkit-slider-thumb]:border [&::-webkit-slider-thumb]:border-[#acacac] [&::-webkit-slider-thumb]:bg-[#f0f0f0]"
      />
    </div>
    <footer className="flex h-5 shrink-0 items-center bg-[#f5f5f5] pr-1 pl-px">
      <span>Ready</span>
      <div className="relative ml-auto">
        <select
          aria-label="Room"
          className="h-5 w-[120px] appearance-none border border-[#acacac] bg-white pl-1"
        >
          <option>Rm1</option>
        </select>
        <Chevron className="pointer-events-none absolute top-[7px] right-[5px]" />
      </div>
      <output className="ml-[5px] whitespace-nowrap">Selected: 1 Area: 371.49 SF Perimeter: 78'10.1"</output>
      <button type="button" aria-label="Expand" className="ml-[6px]">
        <svg width="14" height="12" viewBox="0 0 14 12" fill="none" stroke="#222" strokeWidth="1.300">
          <path d="M1 6L7 1L13 6M1 11L7 6L13 11" />
        </svg>
      </button>
      <button type="button" aria-label="Full screen" className="ml-[2px] size-[13px] border border-black bg-white" />
    </footer>
  </main>
);

/* ---------- right dock ---------- */

const DockIcon = ({ color, children }: { color: string; children: ReactNode }) => (
  <Svg size={22}>
    <rect x="0.500" y="0.500" width="21" height="21" fill="#f8f8f8" stroke={GRAY} />
    <path d="M0 2H22" stroke={color} strokeWidth="4" />
    {children}
  </Svg>
);

const dockItems = [
  {
    label: "Details",
    active: true,
    icon: (
      <DockIcon color="#8550a0">
        <path d="M2 8H11V17H2z" fill="#8550a0" stroke="none" />
        <path d="M13 8.500H20M13 11.500H20M13 14.500H20M13 17.500H20" stroke={GRAY} />
      </DockIcon>
    ),
  },
  {
    label: "Estimates",
    icon: (
      <DockIcon color={GREEN}>
        <path d="M6 7.500L16 12.500L6 17.500z" strokeWidth="1.300" />
      </DockIcon>
    ),
  },
  {
    label: "Layers",
    icon: (
      <DockIcon color={BLUE}>
        <rect x="6.500" y="7.500" width="9" height="10" strokeWidth="1.200" />
        <path d="M8 10H12" stroke="#999" />
      </DockIcon>
    ),
  },
  {
    label: "Notes",
    icon: (
      <DockIcon color={ORANGE}>
        <path d="M4.500 16V7.500H17.500V18.500H9" stroke={GRAY} />
        <path d="M4 15L11 19H4z" fill="#4a9bc4" stroke="none" />
      </DockIcon>
    ),
  },
];

const Dock = () => (
  <aside className="flex w-8 shrink-0 flex-col border-x border-[#c5c5cb] bg-[#f5f5f5] pb-7">
    <button type="button" aria-label="Expand panel" className="h-6 bg-white pl-3 text-[14px]">
      «
    </button>
    <div className="mt-auto border-t border-[#c5c5cb]">
      <Grip />
    </div>
    {dockItems.map(({ label, icon, active }) => (
      <button
        key={label}
        type="button"
        aria-label={label}
        className={`flex h-7 items-center justify-center border-b border-[#c5c5cb] pl-[2px] ${
          active ? "bg-[#f0ffff]" : ""
        }`}
      >
        {icon}
      </button>
    ))}
  </aside>
);

const App = () => {
  return (
    <div className="flex h-screen flex-col overflow-hidden bg-[#222] font-['Noto_Sans','Open_Sans',sans-serif] text-[11px] text-[#111]">
      <div className="flex min-h-0 flex-1">
        <div className="w-2 shrink-0 bg-linear-to-b from-[#04040a] via-[#1c0204] to-[#300a0a]">
          <div className="mt-[29px] h-[634px] w-px bg-white" />
        </div>
        <div className="flex min-w-0 flex-1 flex-col">
          <TitleBar />
          <Tabs />
          <Ribbon />
          <div className="flex min-h-0 flex-1">
            <Sidebar />
            <div className="w-1 shrink-0 bg-[#cfcfd2]" />
            <WorkArea />
            <div className="w-[3px] shrink-0 bg-[#cfcfd2]" />
            <Dock />
          </div>
        </div>
        <div className="w-[9px] shrink-0 bg-black" />
      </div>
      <div className="flex h-2 shrink-0 items-end overflow-hidden bg-[#222]">
        <div className="-mb-[10px] ml-10 size-3 rounded-full bg-[#f08a94]" />
      </div>
    </div>
  );
};

export default App;
